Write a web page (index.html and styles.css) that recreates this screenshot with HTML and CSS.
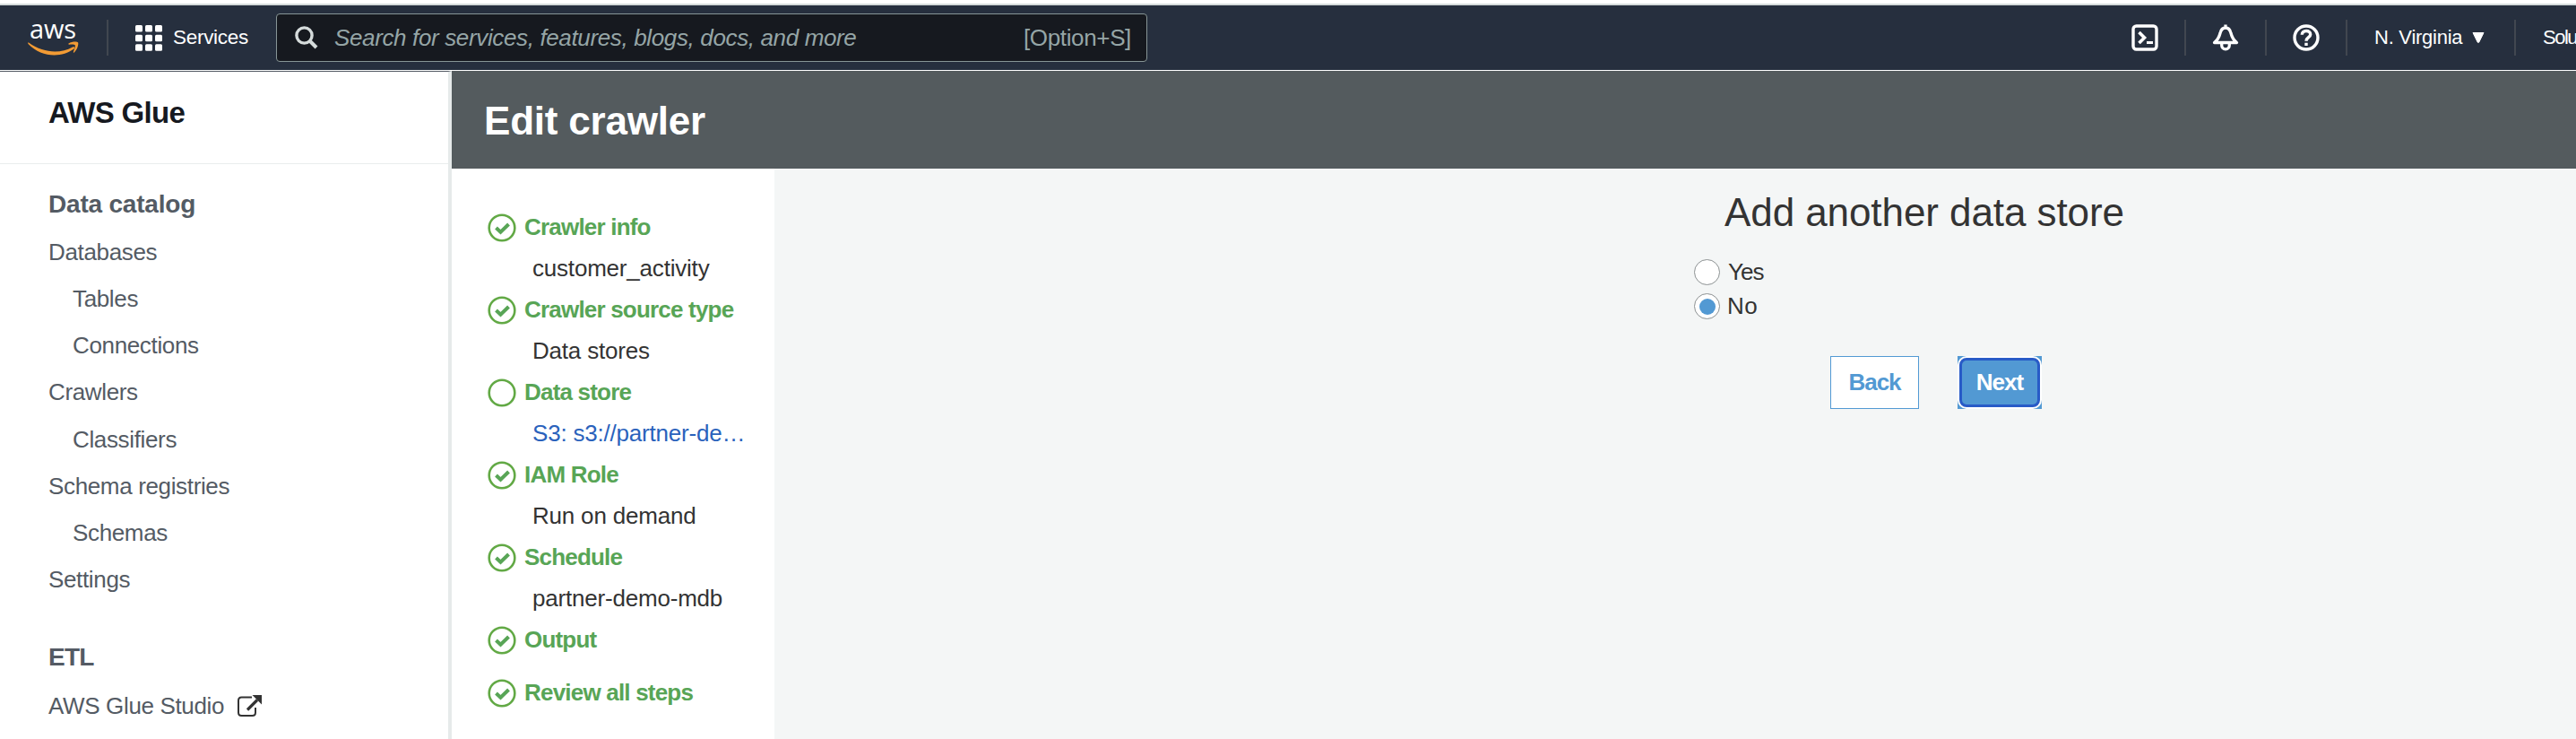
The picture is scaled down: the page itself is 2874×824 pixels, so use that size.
FILE: index.html
```html
<!DOCTYPE html>
<html lang="en">
<head>
<meta charset="utf-8">
<title>AWS Glue - Edit crawler</title>
<link rel="stylesheet" href="styles.css">
</head>
<body>
<svg class="defs" aria-hidden="true">
  <symbol id="done" viewBox="0 0 32 32"><circle cx="16" cy="16" r="14.3" fill="none" stroke="#62a945" stroke-width="2.600"/><path d="M9.5 16l5 4.8L23.5 12" fill="none" stroke="#58a556" stroke-width="4"/></symbol>
  <symbol id="open" viewBox="0 0 32 32"><circle cx="16" cy="16" r="14.3" fill="none" stroke="#62a945" stroke-width="2.600"/></symbol>
</svg>
<header class="nav">
  <a class="logo">
    <span class="logo-text">aws</span>
    <svg class="smile" width="58" height="20" viewBox="0 0 58 20"><path d="M1 1.5C18 13.5 36 14 50 6.500c2-1 3 .5 1.500 2C37 19 15 18 .5 3 0 2 .3 1 1 1.500z" fill="#f29b34"/><path d="M45.500 2.500C49 .2 55 0 56 1.300c1 1.500-.5 8-4.200 11.200-.8.5-1.200.2-.9-.7 1.200-3 2.400-6.500 1.800-7.500-.8-1-4-.8-6.500-.6-.9 0-1.200-.6-.7-1.200z" fill="#f29b34"/></svg>
  </a>
  <i class="sep sep-logo"></i>
  <svg class="grid" width="30" height="29" viewBox="0 0 30 29" fill="#fff"><rect width="8" height="7.500" rx="1.500"/><rect x="11" width="8" height="7.500" rx="1.500"/><rect x="22" width="8" height="7.500" rx="1.500"/><rect y="10.700" width="8" height="7.500" rx="1.500"/><rect x="11" y="10.700" width="8" height="7.500" rx="1.500"/><rect x="22" y="10.700" width="8" height="7.500" rx="1.500"/><rect y="21.300" width="8" height="7.500" rx="1.500"/><rect x="11" y="21.300" width="8" height="7.500" rx="1.500"/><rect x="22" y="21.300" width="8" height="7.500" rx="1.500"/></svg>
  <span class="services">Services</span>
  <div class="search">
    <svg width="26" height="26" viewBox="0 0 26 26" fill="none" stroke="#d5dbdb"><circle cx="10.500" cy="10.500" r="8.600" stroke-width="3.400"/><path d="M16.500 16.500l7.500 7.500" stroke-width="4"/></svg>
    <span class="placeholder">Search for services, features, blogs, docs, and more</span>
    <span class="shortcut">[Option+S]</span>
  </div>
  <div class="tools">
    <span class="tool"><svg width="30" height="30" viewBox="0 0 30 30" fill="none" stroke="#fff" stroke-width="3.400"><rect x="2" y="2" width="26" height="26" rx="3.500"/><path d="M8.500 9l6 6-6 6" stroke-width="3.600"/><path d="M17 20.500h7" stroke-width="3"/></svg></span>
    <span class="tool"><svg width="30" height="30" viewBox="0 0 30 30" fill="none" stroke="#fff" stroke-width="3.300" stroke-linejoin="round"><path d="M15 .5v3M2.500 20.500c4-3 5.500-6.500 6.500-10.500.8-3.600 2.600-6 6-6s5.200 2.400 6 6c1 4 2.500 7.500 6.500 10.500z"/><path d="M10.700 22v1.500a4.300 4.300 0 0 0 8.600 0V22"/></svg></span>
    <span class="tool"><svg width="30" height="30" viewBox="0 0 30 30" fill="none" stroke="#fff" stroke-width="3.400"><circle cx="15" cy="15" r="13"/><path d="M10.300 11.800c0-2.700 2-4.300 4.700-4.300s4.700 1.600 4.700 4c0 3.200-4.700 3.200-4.700 7.200M15 20.700v3.200"/></svg></span>
    <span class="region">N. Virginia<svg width="14" height="12" viewBox="0 0 14 12"><path d="M1 .5h12L7.800 11Q7 12 6.200 11z" fill="#fff" stroke="#fff" stroke-linejoin="round"/></svg></span>
    <span class="account">Solu</span>
  </div>
</header>
<div class="page">
  <aside class="sidebar">
    <h2 class="product">AWS Glue</h2>
    <nav class="links">
      <h3>Data catalog</h3>
      <a>Databases</a>
      <a class="child">Tables</a>
      <a class="child">Connections</a>
      <a>Crawlers</a>
      <a class="child">Classifiers</a>
      <a>Schema registries</a>
      <a class="child">Schemas</a>
      <a>Settings</a>
      <h3 class="etl">ETL</h3>
      <a>AWS Glue Studio<svg class="ext" width="29" height="26" viewBox="0 0 29 26" fill="none" stroke="#333"><path d="M17 3.500H5.500Q2 3.500 2 7v13.500Q2 24 5.500 24h12q3.500 0 3.500-3.500V15" stroke-width="2"/><path d="M12 17.500L23 6.500" stroke-width="3.200"/><path d="M17.500 1H28v10.500z" fill="#333" stroke="none"/></svg></a>
    </nav>
  </aside>
  <div class="content">
    <div class="title-bar"><h1>Edit crawler</h1></div>
    <div class="wizard">
      <ol class="steps">
        <li><b><svg><use href="#done"/></svg>Crawler info</b><span>customer_activity</span></li>
        <li><b><svg><use href="#done"/></svg>Crawler source type</b><span>Data stores</span></li>
        <li><b><svg><use href="#open"/></svg>Data store</b><span class="link">S3: s3://partner-de…</span></li>
        <li><b><svg><use href="#done"/></svg>IAM Role</b><span>Run on demand</span></li>
        <li><b><svg><use href="#done"/></svg>Schedule</b><span>partner-demo-mdb</span></li>
        <li class="short"><b><svg><use href="#done"/></svg>Output</b></li>
        <li><b><svg><use href="#done"/></svg>Review all steps</b></li>
      </ol>
      <main class="form">
        <h2>Add another data store</h2>
        <label><i class="radio"></i><span class="yes">Yes</span></label>
        <label><i class="radio checked"></i><span class="no">No</span></label>
        <div class="buttons"><button class="back">Back</button><button class="next"><span>Next</span></button></div>
      </main>
    </div>
  </div>
</div>
</body>
</html>
```
FILE: styles.css
```css
* { box-sizing: border-box; }
body {
  margin: 0;
  width: 2874px;
  height: 824px;
  overflow: hidden;
  background: #fff;
  color: #333;
  font-family: "Liberation Sans", Arial, sans-serif;
}
h1, h2, h3, ol { margin: 0; padding: 0; }
svg { display: block; flex: none; }
.defs { position: absolute; width: 0; height: 0; }

.nav {
  display: flex;
  align-items: center;
  height: 74px;
  margin: 4px 0 1px;
  background: #262f3e;
  border-top: 2px solid #d5dbdb;
  color: #fff;
  white-space: nowrap;
}
.logo { width: 87px; padding-left: 32px; height: 40px; }
.logo-text {
  display: block;
  width: 56px;
  height: 22px;
  padding-left: 1px;
  font: 29px/20px "Open Sans", sans-serif;
  letter-spacing: -.2px;
}
.smile { margin-top: 2px; margin-left: -1px; }
.sep { width: 2px; height: 40px; background: #414750; }
.sep-logo { margin-left: 32px; }
.grid { margin-left: 30px; }
.services { margin-left: 12px; width: 115px; font-size: 22.5px; letter-spacing: -.29px; line-height: 30px; }
.search {
  display: flex;
  align-items: center;
  width: 972px;
  height: 54px;
  padding: 0 17px 0 20px;
  background: #16191f;
  border: 1px solid #879596;
  border-radius: 4px;
  color: #95a5a6;
  font-size: 26px;
  line-height: 32px;
}
.placeholder { margin-left: 18px; flex: 1; font-style: italic; letter-spacing: -.36px; }
.shortcut { letter-spacing: -.35px; }
.tools { display: flex; align-items: center; flex: 1; justify-content: flex-end; }
.tool { display: flex; width: 90px; height: 40px; align-items: center; padding-left: 29px; border-right: 2px solid #414750; }
.region {
  display: flex;
  align-items: center;
  gap: 11px;
  width: 188px;
  height: 40px;
  padding-left: 30px;
  border-right: 2px solid #414750;
  font-size: 22px;
  letter-spacing: -.25px;
}
.account { width: 67px; padding-left: 30px; font-size: 22px; letter-spacing: -1.5px; }

.page { display: flex; height: 745px; }
.sidebar { width: 504px; border-right: 4px solid #e6eaea; border-top: 1px solid #545b64; }
.product {
  height: 103px;
  padding: 27px 0 0 54px;
  border-bottom: 1px solid #eaeded;
  color: #16191f;
  font-size: 33px;
  line-height: 38px;
  letter-spacing: -.7px;
}
.links { padding: 21px 0 0 54px; color: #545b64; }
.links h3 { height: 51px; font-size: 28px; line-height: 48px; letter-spacing: -.2px; }
.links a {
  display: flex;
  height: 52.15px;
  font-size: 26px;
  line-height: 52px;
  letter-spacing: -.35px;
}
.links .child { padding-left: 27px; }
.links .etl { margin-top: 37px; height: 52px; letter-spacing: -.8px; }
.ext { margin: 13px 0 0 14px; }

.content { flex: 1; }
.title-bar { height: 109px; padding: 32px 0 0 36px; background: #545b5e; color: #fff; }
.title-bar h1 { font-size: 44px; line-height: 48px; letter-spacing: -.2px; }
.wizard { display: flex; height: 636px; }
.steps { width: 360px; padding: 45px 0 0 40px; list-style: none; font-size: 26px; }
.steps li { height: 92px; }
.steps .short { height: 59px; }
.steps b { display: flex; align-items: center; height: 41px; color: #58a556; letter-spacing: -.8px; }
.steps b svg { width: 32px; height: 32px; margin-right: 9px; }
.steps span { display: block; padding: 5px 0 0 50px; line-height: 40px; letter-spacing: -.2px; white-space: nowrap; }
.steps .link { color: #2a62bc; }
.form { flex: 1; padding: 23px 0 0 1026px; background: #f4f6f6; }
.form h2 { padding-left: 34px; height: 79px; font-size: 44px; font-weight: 400; line-height: 52px; letter-spacing: -.08px; }
.form label { display: flex; height: 38px; font-size: 26px; line-height: 46px; }
.radio {
  flex: none;
  width: 29px;
  height: 29px;
  margin: -1px 8px 0 0;
  border: 1px solid #8c9192;
  border-radius: 50%;
  background: #fff;
}
.form label span { margin-top: -10px; }
.form label .yes { letter-spacing: -1px; margin-left: 1px; }
.form label .no { letter-spacing: .5px; }
.checked { display: flex; align-items: center; justify-content: center; }
.checked::before { content: ""; width: 18px; height: 18px; border-radius: 50%; background: #5299d3; }
.buttons { display: flex; gap: 43px; margin: 31px 0 0 152px; }
button {
  height: 59px;
  padding: 0;
  font: bold 26px/57px "Liberation Sans", sans-serif;
  letter-spacing: -1px;
  border: 1px solid #5299d3;
}
.back { width: 99px; background: #fff; color: #5299d3; }
.next { width: 94px; padding: 2px; border: 0; background: #5299d3; color: #fff; }
.next span {
  display: block;
  height: 55px;
  line-height: 49px;
  border: 3px solid #285bc7;
  border-radius: 8px;
  background: #5299d3;
  box-shadow: 0 0 0 2px #fff;
}
```
